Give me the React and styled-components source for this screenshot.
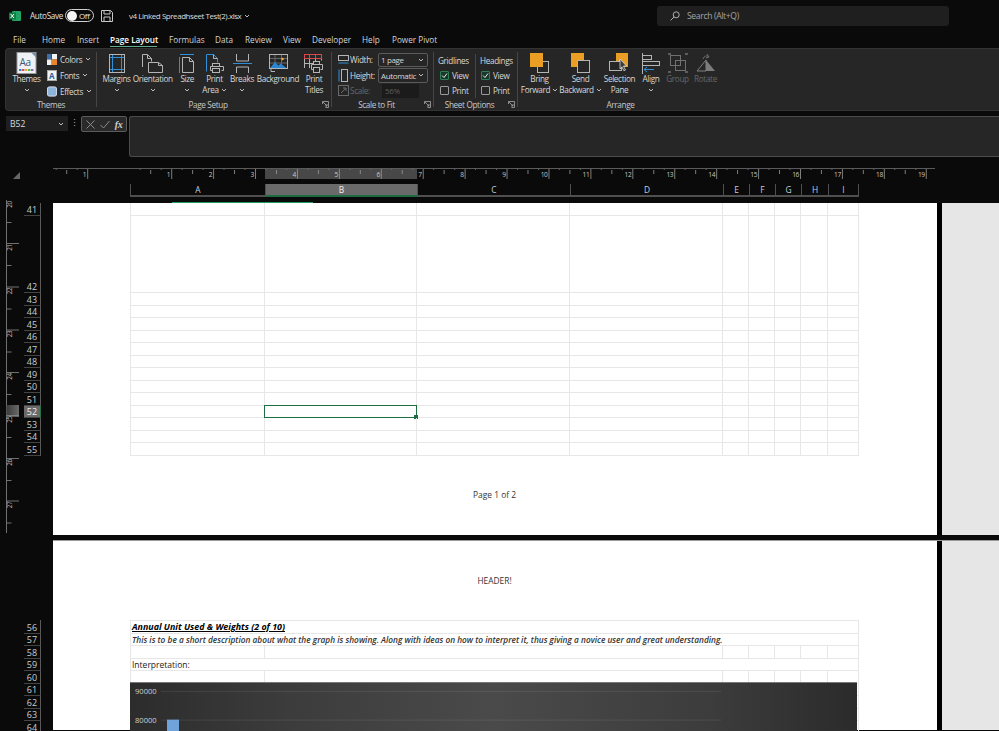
import React from "react";
import styled, { createGlobalStyle } from "styled-components";

const GlobalStyle = createGlobalStyle`
    html, body { margin: 0; padding: 0; background: #0a0a0a; }
    * { box-sizing: border-box; }
`;

const COLS = [135, 152, 153, 153, 26, 26, 26, 27, 31];
const COL_NAMES = ["A", "B", "C", "D", "E", "F", "G", "H", "I"];
const GRID = "#e7e7e7";

const Shell = styled.div`
    width: 999px;
    height: 731px;
    overflow: hidden;
    background: #0a0a0a;
    color: #d8d8d8;
    font-family: "Open Sans", "Noto Sans", "Liberation Sans", sans-serif;
    font-size: 8.2px;
    letter-spacing: -0.35px;
`;

/* title bar */
const TitleBar = styled.div`
    height: 31px;
    display: flex;
    align-items: center;
    padding-left: 9px;
`;
const AutoSave = styled.span`
    margin-left: 9px;
    width: 35px;
    font-size: 8.2px;
    color: #e2e2e2;
`;
const Toggle = styled.div`
    width: 29px;
    height: 13px;
    border: 1px solid #d0d0d0;
    border-radius: 7px;
    display: flex;
    align-items: center;
    padding-left: 0.5px;
    gap: 2.5px;
    font-size: 8px;
    color: #e6e6e6;
    &::before {
        content: "";
        width: 10px;
        height: 10px;
        border-radius: 50%;
        background: #f4f4f4;
    }
`;
const SaveBtn = styled.svg`
    margin-left: 7px;
    width: 12px;
    height: 12px;
`;
const FileName = styled.span`
    margin-left: 16px;
    width: 115px;
    font-size: 8px;
    letter-spacing: -0.45px;
    white-space: nowrap;
    color: #dcdcdc;
`;
const SearchBox = styled.div`
    margin-left: 407px;
    width: 292px;
    height: 20px;
    border-radius: 3px;
    background: #1f1f1f;
    display: flex;
    align-items: center;
    gap: 7px;
    padding-left: 13px;
    color: #a4a4a4;
    font-size: 8.6px;
`;

/* tabs */
const Tabs = styled.div`
    height: 17px;
    display: flex;
    align-items: center;
    padding-left: 13px;
`;
const Tab = styled.div`
    position: relative;
    width: ${(p) => p.$w}px;
    height: 17px;
    line-height: 17px;
    font-size: 8.2px;
    letter-spacing: 0;
    white-space: nowrap;
    color: ${(p) => (p.$active ? "#fff" : "#d4d4d4")};
    font-weight: ${(p) => (p.$active ? 600 : 400)};
    ${(p) =>
        p.$active &&
        `&::after {
            content: "";
            position: absolute;
            left: 0;
            width: 47px;
            bottom: 1px;
            height: 1px;
            background: #5fb08a;
        }`}
`;

/* ribbon */
const Ribbon = styled.div`
    height: 63px;
    margin-left: 5px;
    padding: 3px 0 0;
    display: flex;
    background: #262626;
    border-radius: 4px 0 0 4px;
    border: 1px solid #333;
    border-right: 0;
`;
const Group = styled.div`
    width: ${(p) => p.$w}px;
    margin-bottom: 3px;
    display: flex;
    flex-direction: column;
    border-right: ${(p) => (p.$last ? "0" : "1px solid #454545")};
`;
const GroupBody = styled.div`
    height: 47px;
    flex: none;
    display: flex;
    padding-left: ${(p) => p.$pad || 0}px;
`;
const GroupFooter = styled.div`
    height: 10px;
    flex: none;
    display: flex;
    align-items: center;
`;
const GroupLabel = styled.span`
    flex: 1;
    text-align: center;
    color: #c8c8c8;
    font-size: 8.2px;
`;
const Launcher = styled.svg`
    width: 7px;
    height: 7px;
    margin: 0 2px 0 3px;
`;
const BigButton = styled.div`
    width: ${(p) => p.$w}px;
    display: flex;
    flex-direction: column;
    align-items: center;
    line-height: 10.6px;
    white-space: nowrap;
    color: ${(p) => (p.$off ? "#666" : "#d8d8d8")};
`;
const IconSlot = styled.div`
    height: 22px;
    flex: none;
    display: flex;
    align-items: center;
    justify-content: center;
`;
const Caret = styled.svg`
    width: 6px;
    height: 4px;
    margin-left: ${(p) => (p.$inline ? "2px" : "0")};
    vertical-align: middle;
`;
const CaretLine = styled.div`
    height: 10.6px;
    display: flex;
    align-items: center;
`;
const SmallCol = styled.div`
    display: flex;
    flex-direction: column;
    margin-top: -1px;
`;
const SmallItem = styled.div`
    height: 16px;
    display: flex;
    align-items: center;
    gap: 3px;
`;
const ScaleGrid = styled.div`
    display: grid;
    grid-template-columns: 12px 28px 50px;
    grid-auto-rows: 15.5px;
    align-items: center;
`;
const ScaleLabel = styled.span`
    color: ${(p) => (p.$off ? "#666" : "#d8d8d8")};
`;
const Combo = styled.div`
    height: 14.5px;
    border: 1px solid #5a5a5a;
    border-radius: 2px;
    display: flex;
    align-items: center;
    justify-content: space-between;
    padding: 0 3px 0 2px;
    font-size: 8px;
`;
const Spinner = styled.div`
    width: 37px;
    margin-left: 4px;
    height: 14px;
    background: #1b1b1b;
    color: #5e5e5e;
    padding-left: 3px;
    line-height: 14px;
    font-size: 8px;
`;
const OptionCol = styled.div`
    width: ${(p) => p.$w}px;
    padding-left: ${(p) => p.$pad}px;
    margin: 2px 0 1px;
    border-right: ${(p) => (p.$line ? "1px solid #454545" : "0")};
`;
const OptionTitle = styled.div`
    height: 15px;
    line-height: 15px;
    margin-top: -1.5px;
`;
const OptionRow = styled.div`
    height: 15px;
    display: flex;
    align-items: center;
    gap: 3px;
    padding-left: ${(p) => p.$pad}px;
`;
const CheckBox = styled.div`
    width: 9px;
    height: 9px;
    border: 1px solid ${(p) => (p.$on ? "#2f7d55" : "#9a9a9a")};
    border-radius: 1px;
    background: ${(p) => (p.$on ? "#17382a" : "transparent")};
    display: flex;
    align-items: center;
    justify-content: center;
`;

/* formula bar */
const FormulaRow = styled.div`
    height: 41px;
    margin-top: 5px;
    padding-left: 6px;
    display: flex;
    align-items: flex-start;
`;
const NameBox = styled.div`
    width: 62px;
    height: 15px;
    background: #1f1f1f;
    display: flex;
    align-items: center;
    justify-content: space-between;
    padding: 0 4px;
    font-size: 8.6px;
    letter-spacing: 0;
`;
const Dots = styled.div`
    width: 13px;
    text-align: center;
    line-height: 14px;
    color: #b0b0b0;
    font-size: 9px;
`;
const FxBox = styled.div`
    width: 46px;
    height: 16px;
    border: 1px solid #5c5c5c;
    border-radius: 2px;
    background: #2a2a2a;
    display: flex;
    align-items: center;
    justify-content: space-around;
    padding: 0 1px;
`;
const FxLabel = styled.span`
    font-family: "Liberation Serif", serif;
    font-style: italic;
    font-weight: 700;
    font-size: 10px;
    color: #d0d0d0;
`;
const FormulaInput = styled.div`
    flex: 1;
    margin-left: 2px;
    height: 41px;
    background: #262626;
    border: 1px solid #4c4c4c;
    border-right: 0;
    border-radius: 3px 0 0 3px;
`;

/* rulers and headers */
const RulerRow = styled.div`
    margin-top: 10px;
    height: 14px;
    display: flex;
    padding-left: 13px;
`;
const CornerMark = styled.svg`
    width: 40px;
    height: 14px;
`;
const ColHeaders = styled.div`
    margin-top: 3px;
    margin-left: 130px;
    height: 13px;
    display: flex;
    width: 729px;
    letter-spacing: 0;
    border-bottom: 2px solid #4f4f4f;
`;
const ColHeader = styled.div`
    width: ${(p) => p.$w}px;
    text-align: center;
    line-height: 12px;
    font-size: 8.4px;
    border-left: 1px solid #4f4f4f;
    ${(p) => p.$last && "border-right: 1px solid #4f4f4f;"}
    background: ${(p) => (p.$on ? "#6a6a6a" : "transparent")};
    color: ${(p) => (p.$on ? "#f0f0f0" : "#c8d0d8")};
    ${(p) => p.$on && "box-shadow: 0 2px 0 #1d6b41;"}
`;

const Body = styled.div`
    margin-top: 3px;
    display: flex;
`;
const Gutter = styled.div`
    width: 53px;
    flex: none;
    display: flex;
    padding-left: 6px;
`;
const RowHeaders = styled.div`
    width: 17px;
    margin-left: 4px;
    padding-top: 3px;
    display: flex;
    flex-direction: column;
    letter-spacing: 0;
`;
const RowHeader = styled.div`
    height: ${(p) => p.$h}px;
    margin-top: ${(p) => p.$gap || 0}px;
    display: flex;
    align-items: flex-end;
    justify-content: center;
    flex: none;
    line-height: 10px;
    font-size: 9px;
    color: ${(p) => (p.$on ? "#f0f0f0" : "#c6ced6")};
    background: ${(p) => (p.$on ? "#6a6a6a" : "transparent")};
    border-right: 1px solid ${(p) => (p.$on ? "#217346" : "#5a5a5a")};
    border-bottom: 1px solid #444;
`;

/* sheet */
const Workspace = styled.div`
    width: 946px;
    padding-top: 3px;
    display: flex;
    flex-direction: column;
    letter-spacing: 0;
`;
const PageRow = styled.div`
    display: flex;
    height: ${(p) => p.$h}px;
    flex: none;
    background: #000;
    ${(p) => p.$second && "margin-top: 5px; border-top: 1px solid #9a9a9a;"}
`;
const Page = styled.div`
    width: 884px;
    background: #fff;
    padding-left: 77px;
    padding-top: ${(p) => p.$top || 0}px;
    color: #222;
`;
const SidePanel = styled.div`
    margin-left: 5px;
    width: 57px;
    background: #e6e6e6;
`;
const PageNote = styled.div`
    width: 729px;
    text-align: center;
    font-size: 8.4px;
    color: #333;
    height: ${(p) => p.$h}px;
    padding-top: ${(p) => p.$top}px;
`;
const SelectionTrace = styled.div`
    position: absolute;
    left: 42px;
    top: -1px;
    width: 141px;
    height: 1px;
    background: #1f9d62;
`;
const Sheet = styled.div`
    position: relative;
    width: 729px;
`;
const SheetRow = styled.div`
    display: flex;
    height: ${(p) => p.$h}px;
    border-bottom: 1px solid ${GRID};
    ${(p) => p.$top && `border-top: 1px solid ${GRID};`}
`;
const Cell = styled.div`
    position: relative;
    width: ${(p) => p.$w}px;
    flex: none;
    border-right: 1px solid ${GRID};
    &:first-child { border-left: 1px solid ${GRID}; }
    padding-left: 1px;
    line-height: 12px;
    font-size: ${(p) => p.$size || 8.4}px;
    white-space: nowrap;
    ${(p) => p.$title && "font-style: italic; font-weight: 700; text-decoration: underline; color: #000;"}
    ${(p) => p.$italic && "font-style: italic; font-weight: 600; color: #333;"}
    ${(p) =>
        p.$selected &&
        `&::before {
            content: "";
            position: absolute;
            left: -1px;
            top: -1px;
            right: -1px;
            bottom: -1px;
            border: 1.5px solid #1d6f42;
        }
        &::after {
            content: "";
            position: absolute;
            right: -2px;
            bottom: -2px;
            width: 4px;
            height: 4px;
            background: #1d6f42;
        }`}
`;
const ChartFrame = styled.svg`
    position: absolute;
    left: 0;
    top: 62px;
    width: 727px;
    height: 100px;
    background: linear-gradient(90deg, #2c2c2c 0%, #3c3c3c 22%, #4a4a4a 50%, #3c3c3c 80%, #2b2b2b 100%);
    border-top: 1px solid #787878;
`;

const Chevron = ({ inline }) => (
    <Caret $inline={inline} viewBox="0 0 6 4">
        <path d="M1 1l2 2 2-2" fill="none" stroke="#cfcfcf" strokeWidth="0.9" />
    </Caret>
);

const GRAY = "#b4b4b4";
const BLUE = "#2f8fd8";
const ORANGE = "#eb9e24";

const ExcelLogo = () => (
    <svg width="12" height="12" viewBox="0 0 12 12">
        <rect x="3" y="1" width="9" height="10" rx="1" fill="#21a366" />
        <rect x="0" y="2.5" width="7" height="7" rx="0.6" fill="#107c41" />
        <path d="M1.6 4l3.4 4M5 4L1.6 8" stroke="#fff" strokeWidth="1" />
    </svg>
);

const ThemesIcon = () => (
    <svg width="21" height="22" viewBox="0 0 21 22">
        <rect x="1" y="0.5" width="19" height="21" fill="#eef2f6" stroke="#9a9a9a" />
        <path d="M15 .5h5v5z" fill="#7a93ad" />
        <text x="3.6" y="13.5" fontSize="10" fontFamily="Open Sans" fill="#3c5a78">Aa</text>
        <rect x="3" y="17" width="2.4" height="2" fill="#2f7ed8" />
        <rect x="6" y="17" width="2.4" height="2" fill="#d9534f" />
        <rect x="9" y="17" width="2.4" height="2" fill="#e8b020" />
        <rect x="12" y="17" width="2.4" height="2" fill="#5cb85c" />
        <rect x="15" y="17" width="2.4" height="2" fill="#8e6bbf" />
    </svg>
);
const ColorsIcon = () => (
    <svg width="10" height="11" viewBox="0 0 10 11">
        <rect width="4.6" height="5.5" fill="#3c6ea5" />
        <rect x="5" width="5" height="5.5" fill="#f4f4f4" />
        <rect y="5.5" width="4.6" height="5.5" fill="#f0f0f0" />
        <rect x="5" y="5.5" width="5" height="5.5" fill="#e8842c" />
    </svg>
);
const FontsIcon = () => (
    <svg width="10" height="11" viewBox="0 0 10 11">
        <rect x="0.5" y="0.5" width="9" height="10" fill="#f2f2f2" stroke="#aaa" />
        <text x="2" y="8.6" fontSize="8" fontFamily="Open Sans" fontWeight="700" fill="#2c5f9e">A</text>
    </svg>
);
const EffectsIcon = () => (
    <svg width="10" height="11" viewBox="0 0 10 11">
        <rect x="0.4" y="0.9" width="9.2" height="9.2" rx="2" fill="#8fb4dc" stroke="#d5e2ef" />
    </svg>
);
const MarginsIcon = () => (
    <svg width="16" height="19" viewBox="0 0 16 19" fill="none">
        <rect x="0.5" y="0.5" width="15" height="18" stroke={GRAY} />
        <path d="M3.5 1v17M12.5 1v17M1 3.5h14M1 15.5h14" stroke={BLUE} />
    </svg>
);
const OrientationIcon = () => (
    <svg width="21" height="19" viewBox="0 0 21 19" fill="none" stroke={GRAY}>
        <path d="M.5 13V.5h5l4 4v3" />
        <path d="M5.5.5v4h4" />
        <path d="M6.5 8.5h10l4 3v7h-14z" fill="#262626" />
        <path d="M16.5 8.5v3h4" />
    </svg>
);
const SizeIcon = () => (
    <svg width="16" height="19" viewBox="0 0 16 19" fill="none">
        <path d="M1 0.5h14M.5 3v16" stroke={BLUE} />
        <path d="M3.5 18.5v-15h7l4 4v11z" stroke={GRAY} />
        <path d="M10.5 3.5v4h4" stroke={GRAY} />
    </svg>
);
const PrintAreaIcon = () => (
    <svg width="18" height="19" viewBox="0 0 18 19" fill="none">
        <path d="M.5 17.5V.5h7l4 4v4" stroke={BLUE} />
        <path d="M7.5.5v4h4" stroke={GRAY} />
        <rect x="6.5" y="9.5" width="7" height="3" fill="#262626" stroke={GRAY} />
        <path d="M6.5 16.5h-2v-4h13v4h-2" fill="#262626" stroke={GRAY} />
        <rect x="6.5" y="14.5" width="7" height="4" fill="#262626" stroke={GRAY} />
    </svg>
);
const BreaksIcon = () => (
    <svg width="19" height="19" viewBox="0 0 19 19" fill="none">
        <path d="M3.5 0v7h12V0M3.5 19v-6h12v6" stroke={GRAY} />
        <path d="M0 9.5h19" stroke={BLUE} />
    </svg>
);
const BackgroundIcon = () => (
    <svg width="19" height="18" viewBox="0 0 19 18" fill="none">
        <rect x="0.5" y="0.5" width="18" height="14" stroke={GRAY} />
        <path d="M1 4.5h17M1 9h17M6 1v13M12.5 1v13" stroke="#666" />
        <path d="M1 14l5-6 3.5 3.5 2-2 6 4.5z" fill="#2a86d0" />
        <circle cx="13.5" cy="5" r="1.3" fill="#eeb02e" />
        <path d="M2 14.5v3h4" stroke={GRAY} />
    </svg>
);
const PrintTitlesIcon = () => (
    <svg width="20" height="19" viewBox="0 0 20 19" fill="none">
        <path d="M.5 14V.5h17v6M1 9.5h8M5.5 5v9M11.5 5v3" stroke={GRAY} />
        <rect x="0.5" y="0.5" width="17" height="4" stroke="#d8484a" />
        <path d="M5.5 1v3.5M11.5 1v3.5" stroke="#d8484a" />
        <rect x="9.5" y="7.5" width="6" height="3" fill="#262626" stroke={GRAY} />
        <path d="M9.5 15.5h-2v-5h11v5h-2" fill="#262626" stroke={GRAY} />
        <rect x="9.5" y="13.5" width="6" height="5" fill="#262626" stroke={GRAY} />
    </svg>
);
const BringForwardIcon = () => (
    <svg width="19" height="20" viewBox="0 0 19 20" fill="none">
        <rect x="7.5" y="8.5" width="11" height="11" stroke={GRAY} />
        <rect x="0" y="0" width="13" height="14" fill={ORANGE} />
    </svg>
);
const SendBackwardIcon = () => (
    <svg width="19" height="20" viewBox="0 0 19 20" fill="none">
        <rect x="0" y="0" width="13" height="14" fill={ORANGE} />
        <rect x="6.5" y="7.5" width="12" height="12" fill="#262626" stroke={GRAY} />
    </svg>
);
const SelectionPaneIcon = () => (
    <svg width="22" height="20" viewBox="0 0 22 20" fill="none">
        <rect x="7" y="0" width="12" height="14" fill={ORANGE} />
        <rect x="0.5" y="8.5" width="12" height="9" fill="#262626" stroke={GRAY} />
        <path d="M11 6l6.5 7h-3l2 4-1.6.8-2-4-1.9 2.2z" fill="#3a3a3a" stroke="#d8d8d8" strokeWidth="0.8" />
    </svg>
);
const AlignIcon = () => (
    <svg width="19" height="21" viewBox="0 0 19 21" fill="none">
        <path d="M.5 0v21" stroke={GRAY} />
        <rect x="0.5" y="2.5" width="9" height="4" stroke={GRAY} />
        <rect x="0.5" y="8.5" width="17" height="4" stroke={GRAY} />
        <path d="M2 16.5h10M5 14l-3 2.5L5 19" stroke={BLUE} />
    </svg>
);
const GroupIcon = () => (
    <svg width="20" height="20" viewBox="0 0 20 20" fill="none" stroke="#707070">
        <rect x="2.5" y="2.5" width="10" height="10" />
        <rect x="7.5" y="7.5" width="10" height="10" />
        <path d="M0 1h3M17 1h3M0 19h3M17 19h3" strokeWidth="1.6" />
    </svg>
);
const RotateIcon = () => (
    <svg width="20" height="20" viewBox="0 0 20 20" fill="none">
        <path d="M1 18L10 7v11z" stroke="#808080" />
        <path d="M10 7l9 11h-9z" fill="#7c7c7c" />
        <path d="M7 6c1-3 4-4 6-2M11 1l2 3-3 1" stroke="#707070" />
    </svg>
);

const RULER_TICKS = [87.7, ...Array.from({ length: 19 }, (_, i) => 171.7 + i * 41.92)];

const TopRuler = () => (
    <svg width="895" height="14" viewBox="53 167 895 14">
        <rect x="53" y="168" width="882" height="1" fill="#5a5a5a" />
        <rect x="265" y="169" width="152" height="10" fill="#484848" />
        {RULER_TICKS.map((x, i) => (
            <g key={x}>
                <path d={`M${x} 169v10`} stroke="#9a9a9a" strokeWidth="0.8" />
                <path d={`M${x - 21} 170v4`} stroke="#9a9a9a" strokeWidth="0.8" />
                <path d={`M${x - 10.5} 169v1M${x - 31.5} 169v1`} stroke="#777" strokeWidth="0.8" />
                <text x={x - 1.5} y="177" textAnchor="end" fontSize="6.6" fontFamily="Open Sans" fill="#c8c8c8">
                    {i === 0 ? 1 : i}
                </text>
            </g>
        ))}
    </svg>
);

const V_MAJOR = [200.5, 243.5, 287, 330, 372.5, 415.5, 458.5, 501];

const LeftRuler = () => (
    <svg width="14" height="334" viewBox="6 200 14 334" style={{ flex: "none" }}>
        <path d="M6.5 200v333" stroke="#8a8a8a" strokeWidth="0.8" />
        <defs>
            <linearGradient id="vband" x1="0" x2="1" y1="0" y2="0">
                <stop offset="0" stopColor="#3a3a3a" />
                <stop offset="1" stopColor="#6a6a6a" />
            </linearGradient>
        </defs>
        <rect x="6.5" y="405" width="12.5" height="12" fill="url(#vband)" />
        {V_MAJOR.map((y, i) => (
            <g key={y}>
                {i > 0 && <path d={`M6.5 ${y}h12.5`} stroke="#8a8a8a" strokeWidth="0.8" />}
                <path d={`M6.5 ${y + 22}h5`} stroke="#8a8a8a" strokeWidth="0.8" />
                <text
                    transform={`translate(12 ${y + 4}) rotate(-90)`}
                    textAnchor="middle"
                    fontSize="6.4"
                    fontFamily="Open Sans"
                    fill="#bcbcbc"
                >
                    {20 + i}
                </text>
            </g>
        ))}
    </svg>
);

const rowHeight = (n) => (n === 41 ? 13 : n === 42 ? 77 : n === 56 ? 13.5 : 12.5);

const FirstPageRows = () => {
    const rows = [];
    for (let n = 41; n <= 55; n++) {
        rows.push(
            <SheetRow key={n} $h={rowHeight(n)}>
                {COLS.map((w, i) => (
                    <Cell key={i} $w={w} $selected={n === 52 && i === 1} />
                ))}
            </SheetRow>
        );
    }
    return rows;
};

const MergedRow = ({ children, top, ...rest }) => (
    <SheetRow $h={top ? 13.5 : 12.5} $top={top}>
        <Cell $w={729} {...rest}>
            {children}
        </Cell>
    </SheetRow>
);

const SplitRow = () => (
    <SheetRow $h={12.5}>
        <Cell $w={135} />
        <Cell $w={458} />
        {COLS.slice(4).map((w, i) => (
            <Cell key={i} $w={w} />
        ))}
    </SheetRow>
);

function App() {
    const firstRows = [];
    for (let n = 41; n <= 55; n++) firstRows.push(n);
    const secondRows = [];
    for (let n = 56; n <= 64; n++) secondRows.push(n);

    return (
        <Shell>
            <GlobalStyle />
            <TitleBar>
                <ExcelLogo />
                <AutoSave>AutoSave</AutoSave>
                <Toggle>Off</Toggle>
                <SaveBtn viewBox="0 0 12 12" fill="none" stroke="#c8c8c8">
                    <path d="M.5.5h9l2 2v9H.5z" />
                    <path d="M3 .5v3.5h6V.5M3 11.5V7h6v4.5" />
                </SaveBtn>
                <FileName>v4 Linked Spreadhseet Test(2).xlsx</FileName>
                <Chevron />
                <SearchBox>
                    <svg width="10" height="10" viewBox="0 0 10 10" fill="none" stroke="#b0b0b0">
                        <circle cx="6.2" cy="3.8" r="3" />
                        <path d="M4 6L.6 9.4" />
                    </svg>
                    Search (Alt+Q)
                </SearchBox>
            </TitleBar>

            <Tabs>
                <Tab $w={29}>File</Tab>
                <Tab $w={35}>Home</Tab>
                <Tab $w={33}>Insert</Tab>
                <Tab $w={59} $active>Page Layout</Tab>
                <Tab $w={46}>Formulas</Tab>
                <Tab $w={30}>Data</Tab>
                <Tab $w={38}>Review</Tab>
                <Tab $w={29}>View</Tab>
                <Tab $w={50}>Developer</Tab>
                <Tab $w={30}>Help</Tab>
                <Tab $w={50}>Power Pivot</Tab>
            </Tabs>

            <Ribbon>
                <Group $w={91}>
                    <GroupBody>
                        <BigButton $w={41}>
                            <IconSlot><ThemesIcon /></IconSlot>
                            Themes
                            <CaretLine><Chevron /></CaretLine>
                        </BigButton>
                        <SmallCol>
                            <SmallItem><ColorsIcon />Colors<Chevron /></SmallItem>
                            <SmallItem><FontsIcon />Fonts<Chevron /></SmallItem>
                            <SmallItem><EffectsIcon />Effects<Chevron /></SmallItem>
                        </SmallCol>
                    </GroupBody>
                    <GroupFooter><GroupLabel>Themes</GroupLabel></GroupFooter>
                </Group>

                <Group $w={235}>
                    <GroupBody $pad={3}>
                        <BigButton $w={33}>
                            <IconSlot><MarginsIcon /></IconSlot>
                            Margins
                            <CaretLine><Chevron /></CaretLine>
                        </BigButton>
                        <BigButton $w={39.5}>
                            <IconSlot><OrientationIcon /></IconSlot>
                            Orientation
                            <CaretLine><Chevron /></CaretLine>
                        </BigButton>
                        <BigButton $w={29.5}>
                            <IconSlot><SizeIcon /></IconSlot>
                            Size
                            <CaretLine><Chevron /></CaretLine>
                        </BigButton>
                        <BigButton $w={25}>
                            <IconSlot><PrintAreaIcon /></IconSlot>
                            Print
                            <CaretLine>Area<Chevron inline /></CaretLine>
                        </BigButton>
                        <BigButton $w={30}>
                            <IconSlot><BreaksIcon /></IconSlot>
                            Breaks
                            <CaretLine><Chevron /></CaretLine>
                        </BigButton>
                        <BigButton $w={42}>
                            <IconSlot><BackgroundIcon /></IconSlot>
                            Background
                        </BigButton>
                        <BigButton $w={30}>
                            <IconSlot><PrintTitlesIcon /></IconSlot>
                            Print
                            <CaretLine>Titles</CaretLine>
                        </BigButton>
                    </GroupBody>
                    <GroupFooter>
                        <GroupLabel>Page Setup</GroupLabel>
                        <Launcher viewBox="0 0 7 7" fill="none" stroke="#a8a8a8" strokeWidth="0.8">
                            <path d="M.5 3V.5H6.5V6.5H3.5M1 1l4 4M5 3v2H3" />
                        </Launcher>
                    </GroupFooter>
                </Group>

                <Group $w={102}>
                    <GroupBody $pad={6}>
                        <ScaleGrid>
                            <svg width="11" height="10" viewBox="0 0 11 10" fill="none">
                                <rect x="0.5" y="0.5" width="10" height="5" stroke={GRAY} />
                                <path d="M.5 8h10" stroke={BLUE} />
                            </svg>
                            <ScaleLabel>Width:</ScaleLabel>
                            <Combo>1 page<Chevron /></Combo>
                            <svg width="11" height="13" viewBox="0 0 11 13" fill="none">
                                <rect x="3.5" y="0.5" width="6" height="12" stroke={GRAY} />
                                <path d="M1 .5v12" stroke={BLUE} />
                            </svg>
                            <ScaleLabel>Height:</ScaleLabel>
                            <Combo>Automatic<Chevron /></Combo>
                            <svg width="11" height="11" viewBox="0 0 11 11" fill="none" stroke="#6a6a6a">
                                <rect x="0.5" y="0.5" width="10" height="10" />
                                <path d="M3 8l5-5M5 3h3v3" />
                            </svg>
                            <ScaleLabel $off>Scale:</ScaleLabel>
                            <Spinner>56%</Spinner>
                        </ScaleGrid>
                    </GroupBody>
                    <GroupFooter>
                        <GroupLabel>Scale to Fit</GroupLabel>
                        <Launcher viewBox="0 0 7 7" fill="none" stroke="#a8a8a8" strokeWidth="0.8">
                            <path d="M.5 3V.5H6.5V6.5H3.5M1 1l4 4M5 3v2H3" />
                        </Launcher>
                    </GroupFooter>
                </Group>

                <Group $w={84}>
                    <GroupBody>
                        <OptionCol $w={42} $pad={4} $line>
                            <OptionTitle>Gridlines</OptionTitle>
                            <OptionRow $pad={2}>
                                <CheckBox $on>
                                    <svg width="7" height="7" viewBox="0 0 7 7" fill="none">
                                        <path d="M1 3.5l2 2 3-4" stroke="#e8e8e8" />
                                    </svg>
                                </CheckBox>
                                View
                            </OptionRow>
                            <OptionRow $pad={2}><CheckBox />Print</OptionRow>
                        </OptionCol>
                        <OptionCol $w={41} $pad={4}>
                            <OptionTitle>Headings</OptionTitle>
                            <OptionRow $pad={1}>
                                <CheckBox $on>
                                    <svg width="7" height="7" viewBox="0 0 7 7" fill="none">
                                        <path d="M1 3.5l2 2 3-4" stroke="#e8e8e8" />
                                    </svg>
                                </CheckBox>
                                View
                            </OptionRow>
                            <OptionRow $pad={1}><CheckBox />Print</OptionRow>
                        </OptionCol>
                    </GroupBody>
                    <GroupFooter>
                        <GroupLabel>Sheet Options</GroupLabel>
                        <Launcher viewBox="0 0 7 7" fill="none" stroke="#a8a8a8" strokeWidth="0.8">
                            <path d="M.5 3V.5H6.5V6.5H3.5M1 1l4 4M5 3v2H3" />
                        </Launcher>
                    </GroupFooter>
                </Group>

                <Group $w={205} $last>
                    <GroupBody $pad={1}>
                        <BigButton $w={41}>
                            <IconSlot><BringForwardIcon /></IconSlot>
                            Bring
                            <CaretLine>Forward<Chevron inline /></CaretLine>
                        </BigButton>
                        <BigButton $w={41}>
                            <IconSlot><SendBackwardIcon /></IconSlot>
                            Send
                            <CaretLine>Backward<Chevron inline /></CaretLine>
                        </BigButton>
                        <BigButton $w={37}>
                            <IconSlot><SelectionPaneIcon /></IconSlot>
                            Selection
                            <CaretLine>Pane</CaretLine>
                        </BigButton>
                        <BigButton $w={26}>
                            <IconSlot><AlignIcon /></IconSlot>
                            Align
                            <CaretLine><Chevron /></CaretLine>
                        </BigButton>
                        <BigButton $w={27} $off>
                            <IconSlot><GroupIcon /></IconSlot>
                            Group
                        </BigButton>
                        <BigButton $w={29} $off>
                            <IconSlot><RotateIcon /></IconSlot>
                            Rotate
                        </BigButton>
                    </GroupBody>
                    <GroupFooter><GroupLabel>Arrange</GroupLabel></GroupFooter>
                </Group>
            </Ribbon>

            <FormulaRow>
                <NameBox>B52<Chevron /></NameBox>
                <Dots>⋮</Dots>
                <FxBox>
                    <svg width="9" height="9" viewBox="0 0 9 9" fill="none" stroke="#8a8a8a">
                        <path d="M.5.5l8 8M8.5.5l-8 8" />
                    </svg>
                    <svg width="10" height="9" viewBox="0 0 10 9" fill="none" stroke="#8a8a8a">
                        <path d="M.5 5l3 3 6-7" />
                    </svg>
                    <FxLabel>fx</FxLabel>
                </FxBox>
                <FormulaInput />
            </FormulaRow>

            <RulerRow>
                <CornerMark viewBox="0 0 40 14">
                    <path d="M0 12h7V5z" fill="#666" />
                </CornerMark>
                <TopRuler />
            </RulerRow>

            <ColHeaders>
                {COLS.map((w, i) => (
                    <ColHeader key={i} $w={w} $on={i === 1} $last={i === COLS.length - 1}>
                        {COL_NAMES[i]}
                    </ColHeader>
                ))}
            </ColHeaders>

            <Body>
                <Gutter>
                    <LeftRuler />
                    <RowHeaders>
                        {firstRows.map((n) => (
                            <RowHeader key={n} $h={rowHeight(n)} $on={n === 52}>
                                {n}
                            </RowHeader>
                        ))}
                        {secondRows.map((n) => (
                            <RowHeader key={n} $h={rowHeight(n)} $gap={n === 56 ? 164.5 : 0}>
                                {n}
                            </RowHeader>
                        ))}
                    </RowHeaders>
                </Gutter>

                <Workspace>
                    <PageRow $h={332}>
                        <Page>
                            <Sheet>
                                <SelectionTrace />
                                <FirstPageRows />
                            </Sheet>
                            <PageNote $h={80} $top={33}>Page 1 of 2</PageNote>
                        </Page>
                        <SidePanel />
                    </PageRow>
                    <PageRow $h={190} $second>
                        <Page>
                            <PageNote $h={79} $top={34}>HEADER!</PageNote>
                            <Sheet>
                                <MergedRow top $title $size={8.9}>Annual Unit Used &amp; Weights (2 of 10)</MergedRow>
                                <MergedRow $italic $size={8.3}>
                                    This is to be a short description about what the graph is showing. Along with ideas on how to interpret it, thus giving a novice user and great understanding.
                                </MergedRow>
                                <SplitRow />
                                <MergedRow $size={8.5}>Interpretation:</MergedRow>
                                <SplitRow />
                                <SplitRow />
                                <SplitRow />
                                <SplitRow />
                                <SplitRow />
                                <ChartFrame viewBox="0 0 727 100" preserveAspectRatio="none">
                                    <path d="M31 8.5h560M31 37.5h560" stroke="rgba(255,255,255,0.09)" />
                                    <text x="5" y="11" fontSize="7.6" fontFamily="Open Sans" fill="#d0d0d0">90000</text>
                                    <text x="5" y="40" fontSize="7.6" fontFamily="Open Sans" fill="#d0d0d0">80000</text>
                                    <rect x="37" y="37" width="12" height="63" fill="#6fa3d9" />
                                </ChartFrame>
                            </Sheet>
                        </Page>
                        <SidePanel />
                    </PageRow>
                </Workspace>
            </Body>
        </Shell>
    );
}

export default App;
